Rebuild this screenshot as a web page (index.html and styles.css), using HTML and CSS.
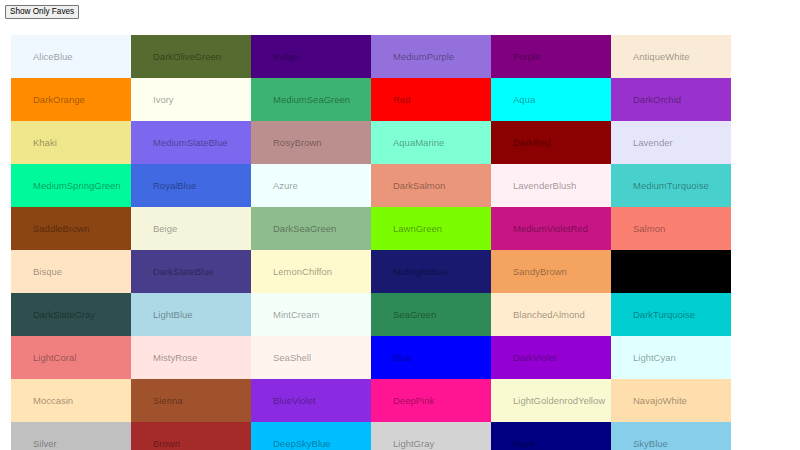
FILE: index.html
```html
<!DOCTYPE html>
<html lang="en">
<head>
<meta charset="utf-8">
<title>Colors</title>
<link rel="stylesheet" href="styles.css">
</head>
<body>
<button class="fave-toggle" type="button">Show Only Faves</button>
<div class="swatches">
  <div class="swatch" style="background:AliceBlue"><span>AliceBlue</span></div>
  <div class="swatch" style="background:DarkOliveGreen"><span>DarkOliveGreen</span></div>
  <div class="swatch" style="background:Indigo"><span>Indigo</span></div>
  <div class="swatch" style="background:MediumPurple"><span>MediumPurple</span></div>
  <div class="swatch" style="background:Purple"><span>Purple</span></div>
  <div class="swatch" style="background:AntiqueWhite"><span>AntiqueWhite</span></div>

  <div class="swatch" style="background:DarkOrange"><span>DarkOrange</span></div>
  <div class="swatch" style="background:Ivory"><span>Ivory</span></div>
  <div class="swatch" style="background:MediumSeaGreen"><span>MediumSeaGreen</span></div>
  <div class="swatch" style="background:Red"><span>Red</span></div>
  <div class="swatch" style="background:Aqua"><span>Aqua</span></div>
  <div class="swatch" style="background:DarkOrchid"><span>DarkOrchid</span></div>

  <div class="swatch" style="background:Khaki"><span>Khaki</span></div>
  <div class="swatch" style="background:MediumSlateBlue"><span>MediumSlateBlue</span></div>
  <div class="swatch" style="background:RosyBrown"><span>RosyBrown</span></div>
  <div class="swatch" style="background:AquaMarine"><span>AquaMarine</span></div>
  <div class="swatch" style="background:DarkRed"><span>DarkRed</span></div>
  <div class="swatch" style="background:Lavender"><span>Lavender</span></div>

  <div class="swatch" style="background:MediumSpringGreen"><span>MediumSpringGreen</span></div>
  <div class="swatch" style="background:RoyalBlue"><span>RoyalBlue</span></div>
  <div class="swatch" style="background:Azure"><span>Azure</span></div>
  <div class="swatch" style="background:DarkSalmon"><span>DarkSalmon</span></div>
  <div class="swatch" style="background:LavenderBlush"><span>LavenderBlush</span></div>
  <div class="swatch" style="background:MediumTurquoise"><span>MediumTurquoise</span></div>

  <div class="swatch" style="background:SaddleBrown"><span>SaddleBrown</span></div>
  <div class="swatch" style="background:Beige"><span>Beige</span></div>
  <div class="swatch" style="background:DarkSeaGreen"><span>DarkSeaGreen</span></div>
  <div class="swatch" style="background:LawnGreen"><span>LawnGreen</span></div>
  <div class="swatch" style="background:MediumVioletRed"><span>MediumVioletRed</span></div>
  <div class="swatch" style="background:Salmon"><span>Salmon</span></div>

  <div class="swatch" style="background:Bisque"><span>Bisque</span></div>
  <div class="swatch" style="background:DarkSlateBlue"><span>DarkSlateBlue</span></div>
  <div class="swatch" style="background:LemonChiffon"><span>LemonChiffon</span></div>
  <div class="swatch" style="background:MidnightBlue"><span>MidnightBlue</span></div>
  <div class="swatch" style="background:SandyBrown"><span>SandyBrown</span></div>
  <div class="swatch" style="background:Black"><span>Black</span></div>

  <div class="swatch" style="background:DarkSlateGray"><span>DarkSlateGray</span></div>
  <div class="swatch" style="background:LightBlue"><span>LightBlue</span></div>
  <div class="swatch" style="background:MintCream"><span>MintCream</span></div>
  <div class="swatch" style="background:SeaGreen"><span>SeaGreen</span></div>
  <div class="swatch" style="background:BlanchedAlmond"><span>BlanchedAlmond</span></div>
  <div class="swatch" style="background:DarkTurquoise"><span>DarkTurquoise</span></div>

  <div class="swatch" style="background:LightCoral"><span>LightCoral</span></div>
  <div class="swatch" style="background:MistyRose"><span>MistyRose</span></div>
  <div class="swatch" style="background:SeaShell"><span>SeaShell</span></div>
  <div class="swatch" style="background:Blue"><span>Blue</span></div>
  <div class="swatch" style="background:DarkViolet"><span>DarkViolet</span></div>
  <div class="swatch" style="background:LightCyan"><span>LightCyan</span></div>

  <div class="swatch" style="background:Moccasin"><span>Moccasin</span></div>
  <div class="swatch" style="background:Sienna"><span>Sienna</span></div>
  <div class="swatch" style="background:BlueViolet"><span>BlueViolet</span></div>
  <div class="swatch" style="background:DeepPink"><span>DeepPink</span></div>
  <div class="swatch" style="background:LightGoldenrodYellow"><span>LightGoldenrodYellow</span></div>
  <div class="swatch" style="background:NavajoWhite"><span>NavajoWhite</span></div>

  <div class="swatch" style="background:Silver"><span>Silver</span></div>
  <div class="swatch" style="background:Brown"><span>Brown</span></div>
  <div class="swatch" style="background:DeepSkyBlue"><span>DeepSkyBlue</span></div>
  <div class="swatch" style="background:LightGray"><span>LightGray</span></div>
  <div class="swatch" style="background:Navy"><span>Navy</span></div>
  <div class="swatch" style="background:SkyBlue"><span>SkyBlue</span></div>
</div>
</body>
</html>
```
FILE: styles.css
```css
html, body {
  background: #fff;
}

body {
  margin: 5px;
  font-family: "Liberation Sans", Arial, sans-serif;
}

/* small native-looking toggle button */
.fave-toggle {
  display: block;
  margin: 0;
  padding: 1px 4px;
  font-family: "Liberation Sans", Arial, sans-serif;
  font-size: 8.2px;
  line-height: 10px;
  color: #000;
  background: #efefef;
  border: 1px solid #767676;
  border-radius: 1px;
}

/* six-column wall of named colours */
.swatches {
  display: grid;
  grid-template-columns: repeat(6, 120px);
  grid-auto-rows: 43px;
  margin: 16px 0 0 6px;
}

.swatch {
  display: flex;
  align-items: center;
  padding-left: 22px;
  font-size: 9.5px;
  color: rgba(0, 0, 0, 0.4);
  white-space: nowrap;
  overflow: hidden;
}
```
